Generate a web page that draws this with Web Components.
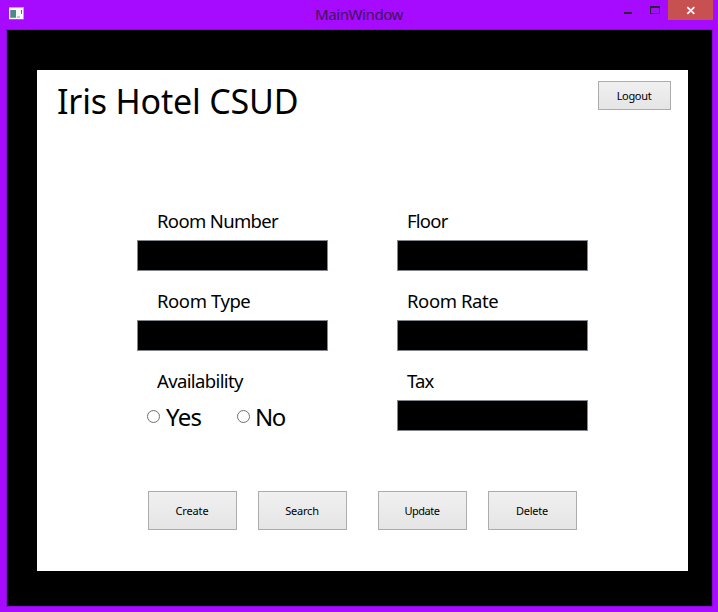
<!DOCTYPE html>
<html lang="en"><head><meta charset="utf-8"><title>MainWindow</title>
<style>
body{margin:0;background:#a60aff;font-family:"Noto Sans","DejaVu Sans",sans-serif;color:#000}
</style></head><body>
<main-window></main-window>
<script>
const define=(name,html)=>customElements.define(name,class extends HTMLElement{
  constructor(){super();this.attachShadow({mode:'open'}).innerHTML=html;}
});
define('title-bar',`<style>
:host{display:flex;height:29px;align-items:flex-start;box-sizing:border-box;padding:0 5px 0 9px}
.icon{margin-top:7px;width:15px;height:13px}
.name{flex:1;text-align:center;font-size:15px;line-height:28px;color:#3b1654;padding-left:80px}
.min,.max{width:27px;height:20px}
.close{width:45px;height:20px;background:#c75050}
svg{display:block;flex:none}
</style>
<svg class="icon" viewBox="0 0 15 13" shape-rendering="crispEdges"><defs><linearGradient id="p" x1="0" y1="0" x2="1" y2="1"><stop stop-color="#4c82a4"/><stop offset="1" stop-color="#479568"/></linearGradient></defs><path fill="#b5acb8" d="M0 0h15v13H0z"/><path fill="#f8f8f8" d="M0 1h14v11H0z"/><path fill="#8b9eac" d="M1 3h6v8H1z"/><path fill="url(#p)" d="M2 3h5v7H2z"/><path fill="#37617c" d="M12 3h1v2h-1z"/><path fill="#438a66" d="M12 5h1v2h-1z"/><path fill="#ccc" d="M8 9h3v2H8z"/><path fill="#807784" d="M0 12h15v1H0z"/></svg>
<span class="name"><slot></slot></span>
<svg class="min" viewBox="0 0 27 20"><path fill="#2c2431" d="M10 12h8v2h-8z"/></svg>
<svg class="max" viewBox="0 0 27 20" shape-rendering="crispEdges"><path fill="#2c2431" fill-rule="evenodd" d="M9 6h10v8H9zM10 8v5h8V8z"/></svg>
<svg class="close" viewBox="0 0 45 20"><path fill="none" stroke="#fff" stroke-width="1.7" d="M19.3 7.2l7 6.6M26.3 7.2l-7 6.6"/></svg>`);
define('push-button',`<style>
:host{display:block}
button{display:block;box-sizing:border-box;width:100%;height:100%;padding:0 1px 0 0;border:1px solid #acacac;border-radius:0;background:linear-gradient(#f0f0f0,#e5e5e5);font:inherit;font-size:11px;letter-spacing:inherit;color:#000}
</style><button><slot></slot></button>`);
define('form-field',`<style>
:host{display:flex;flex-direction:column;gap:9px}
.label{font-size:18.5px;line-height:20px;height:20px;white-space:nowrap;padding-left:var(--indent,20px)}
.box{height:31px;box-sizing:border-box;border:1px solid #828790;background:#000}
</style><div class="label"><slot></slot></div><slot name="control"><div class="box"></div></slot>`);
define('radio-option',`<style>
:host{display:flex;align-items:center;width:90px;box-sizing:border-box}
i{box-sizing:border-box;width:13px;height:13px;border:1px solid #707070;border-radius:50%;background:#fff}
span{font-size:24px;line-height:31px;padding-left:var(--text-gap,6px)}
</style><i></i><span><slot></slot></span>`);
define('main-window',`<style>
:host{display:flex;flex-direction:column;height:612px;background:#a60aff}
.client{box-sizing:border-box;height:578px;margin:0 5px 0 6px;border:1px solid #8d08da;background:#000;padding:40px 24px 35px 30px}
.page{height:501px;background:#fff;display:flex;flex-direction:column}
header{display:flex;justify-content:space-between;padding:11px 17px 0 20px;height:130px}
h1{margin:0;font-weight:400;font-size:34px;line-height:40px;letter-spacing:-.18px;white-space:nowrap}
header push-button{width:73px;height:29px}
.form{display:grid;grid-template-columns:191px 191px;column-gap:69px;row-gap:20px;padding-left:100px}
.right{--indent:10px}
.radios{display:flex;height:33px;margin-bottom:-2px;padding-left:10px}
.actions{display:flex;gap:21px;padding:60px 0 0 111px}
.actions push-button{width:89px;height:39px}
.gap{margin-left:10px}
</style>
<title-bar style="letter-spacing:-.42px">MainWindow</title-bar>
<div class="client"><div class="page">
<header><h1>Iris Hotel CSUD</h1><push-button style="letter-spacing:-.32px">Logout</push-button></header>
<section class="form">
<form-field style="letter-spacing:-.65px">Room Number</form-field>
<form-field class="right" style="letter-spacing:-.77px">Floor</form-field>
<form-field style="letter-spacing:-.42px">Room Type</form-field>
<form-field class="right" style="letter-spacing:-.4px">Room Rate</form-field>
<form-field style="letter-spacing:-.63px">Availability<div class="radios" slot="control"><radio-option style="letter-spacing:-.75px">Yes</radio-option><radio-option style="letter-spacing:-1.6px;--text-gap:5px">No</radio-option></div></form-field>
<form-field class="right" style="letter-spacing:-.8px">Tax</form-field>
</section>
<section class="actions">
<push-button style="letter-spacing:-.12px">Create</push-button><push-button style="letter-spacing:-.2px">Search</push-button><push-button class="gap" style="letter-spacing:-.45px">Update</push-button><push-button style="letter-spacing:-.24px">Delete</push-button>
</section>
</div></div>`);
</script></body></html>
